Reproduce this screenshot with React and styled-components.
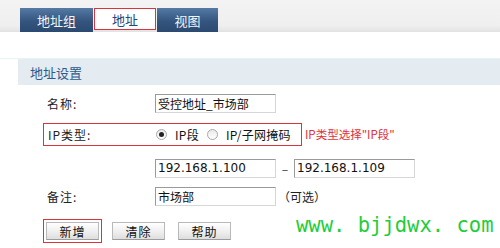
import React from 'react';
import styled, { createGlobalStyle } from 'styled-components';

const GlobalStyle = createGlobalStyle`
  html, body {
    margin: 0;
    padding: 0;
    background: #ffffff;
  }
  body {
    width: 500px;
    height: 248px;
    overflow: hidden;
    font-family: "Noto Sans CJK SC", "DejaVu Sans", sans-serif;
    font-size: 12px;
    color: #222;
  }
`;

const Page = styled.div`
  position: relative;
  width: 500px;
  height: 248px;
  overflow: hidden;
`;

const TabBar = styled.div`
  display: flex;
  align-items: flex-end;
  gap: 1px;
  height: 32px;
  padding-left: 20px;
  box-sizing: border-box;
  background: linear-gradient(#f3f3f3, #efefef 80%, #e2e2e2);
`;

const Tab = styled.div`
  display: flex;
  align-items: center;
  justify-content: center;
  width: ${(p) => p.$width}px;
  height: ${(p) => (p.$active ? 22 : 24)}px;
  margin-bottom: ${(p) => (p.$active ? 2 : 0)}px;
  box-sizing: border-box;
  font-size: 13px;
  color: ${(p) => (p.$active ? '#1e4a7c' : '#f2f6fa')};
  background: ${(p) => (p.$active ? '#ffffff' : 'linear-gradient(#557aa4, #34557e 55%, #2b4a71)')};
  border: ${(p) => (p.$active ? '1px solid #d8343d' : 'none')};
`;

const Gap = styled.div`
  height: 26px;
  border-bottom: 1px solid #e6f4f4;
`;

const SectionHead = styled.div`
  display: flex;
  align-items: center;
  height: 26px;
  margin-left: 18px;
  padding-left: 12px;
  background: #e4ebf1;
  color: #2b5a8e;
  font-size: 13px;
`;

const Form = styled.div`
  display: flex;
  flex-direction: column;
  padding: 6px 0 0 43px;
`;

const Row = styled.div`
  display: flex;
  align-items: center;
  height: ${(p) => p.$h || 24}px;
  margin-top: ${(p) => p.$mt || 0}px;
  width: ${(p) => (p.$boxed ? '259px' : 'auto')};
  box-sizing: border-box;
  padding-left: 4px;
  border: ${(p) => (p.$boxed ? '1px solid #d8343d' : 'none')};
`;

const Label = styled.div`
  width: ${(p) => (p.$boxed ? 107 : 108)}px;
  font-size: 12px;
  color: #222;
  letter-spacing: 1px;
`;

const Input = styled.div`
  display: flex;
  align-items: center;
  width: 121px;
  height: 19px;
  box-sizing: border-box;
  padding-left: 2px;
  border-top: 1px solid #9a9a9a;
  border-left: 1px solid #9a9a9a;
  border-right: 1px solid #d6d6d6;
  border-bottom: 1px solid #d6d6d6;
  font-family: ${(p) => (p.$latin ? '"DejaVu Sans", sans-serif' : '"Noto Sans CJK SC", sans-serif')};
  font-size: 12px;
  color: #111;
  background: #fff;
`;

const Radio = styled.span`
  display: inline-flex;
  align-items: center;
  justify-content: center;
  width: 11px;
  height: 11px;
  box-sizing: border-box;
  border-radius: 50%;
  border: 1px solid #a9a9a9;
  background: linear-gradient(#e9e9e9, #ffffff);
  margin: 0 ${(p) => p.$mr || 8}px 0 ${(p) => p.$ml || 0}px;
  &::after {
    content: '';
    display: ${(p) => (p.$checked ? 'block' : 'none')};
    width: 5px;
    height: 5px;
    border-radius: 50%;
    background: #222;
  }
`;

const RadioText = styled.span`
  font-size: 12px;
  color: #111;
  letter-spacing: 0.3px;
`;

const Hint = styled.span`
  position: absolute;
  left: 305px;
  top: 126px;
  font-size: 11.5px;
  color: #e0313a;
`;

const Sep = styled.span`
  width: 18px;
  text-align: center;
  font-size: 12px;
  color: #333;
`;

const Optional = styled.span`
  margin-left: 2px;
  font-size: 12px;
  color: #222;
`;

const Buttons = styled.div`
  display: flex;
  align-items: center;
  gap: 13px;
  margin-top: 12px;
  height: 22px;
`;

const Focus = styled.div`
  display: flex;
  padding: 2px;
  border: 1px solid #d8343d;
  margin-right: -3px;
`;

const Button = styled.div`
  display: flex;
  align-items: center;
  justify-content: center;
  width: 53px;
  height: 18px;
  box-sizing: border-box;
  border: 1px solid #b9b9b9;
  border-bottom-color: #9c9c9c;
  background: linear-gradient(#ffffff, #ededed 60%, #dedede);
  font-size: 12px;
  color: #111;
  letter-spacing: 1px;
`;

const Watermark = styled.div`
  position: absolute;
  left: 296px;
  top: 213px;
  font-family: "DejaVu Sans Mono", monospace;
  font-size: 20.5px;
  color: #1fcd3a;
  white-space: pre;
`;

export default function App() {
  return (
    <Page>
      <GlobalStyle />
      <TabBar>
        <Tab $width={73}>地址组</Tab>
        <Tab $width={62} $active>地址</Tab>
        <Tab $width={61}>视图</Tab>
      </TabBar>
      <Gap />
      <SectionHead>地址设置</SectionHead>
      <Form>
        <Row $h={24}>
          <Label>名称:</Label>
          <Input>受控地址_市场部</Input>
        </Row>
        <Row $h={23} $mt={8} $boxed>
          <Label $boxed>IP类型:</Label>
          <Radio $checked $ml={1} />
          <RadioText>IP段</RadioText>
          <Radio $ml={8} $mr={8} />
          <RadioText>IP/子网掩码</RadioText>
        </Row>
        <Row $h={24} $mt={10}>
          <Label />
          <Input $latin>192.168.1.100</Input>
          <Sep>–</Sep>
          <Input $latin>192.168.1.109</Input>
        </Row>
        <Row $h={24} $mt={4}>
          <Label>备注:</Label>
          <Input>市场部</Input>
          <Optional>（可选）</Optional>
        </Row>
        <Buttons>
          <Focus>
            <Button>新增</Button>
          </Focus>
          <Button>清除</Button>
          <Button>帮助</Button>
        </Buttons>
      </Form>
      <Hint>IP类型选择"IP段"</Hint>
      <Watermark>www. bjjdwx. com</Watermark>
    </Page>
  );
}
